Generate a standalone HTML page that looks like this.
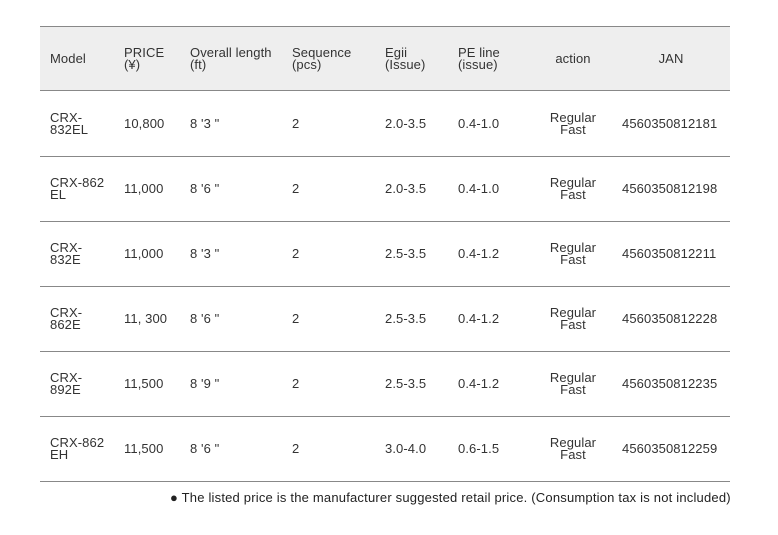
<!DOCTYPE html>
<html><head><meta charset="utf-8"><style>
body{margin:0;width:778px;height:535px;background:#fff;font-family:"Liberation Sans","Noto Sans CJK JP",sans-serif;font-size:13px;color:#333;position:relative;overflow:hidden}
.hd{position:absolute;left:40px;top:26px;width:690px;height:65px;background:#eeeeee;border-top:1px solid #888;border-bottom:1px solid #888;box-sizing:border-box}
.ln{position:absolute;left:40px;width:690px;height:1px;background:#888}
.t{position:absolute;line-height:12px;white-space:nowrap;letter-spacing:0.1px}
.c{text-align:center;transform:translateX(-50%)}
.note{position:absolute;left:170px;top:490px;font-size:13px;color:#222;letter-spacing:0.2px;white-space:nowrap}
</style></head><body>
<div class="hd"></div>
<div class="ln" style="top:156px"></div>
<div class="ln" style="top:221px"></div>
<div class="ln" style="top:286px"></div>
<div class="ln" style="top:351px"></div>
<div class="ln" style="top:416px"></div>
<div class="ln" style="top:481px"></div>

<div class="t" style="left:50px;top:53px">Model</div>
<div class="t" style="left:124px;top:47px">PRICE<br>(¥)</div>
<div class="t" style="left:190px;top:47px">Overall length<br>(ft)</div>
<div class="t" style="left:292px;top:47px">Sequence<br>(pcs)</div>
<div class="t" style="left:385px;top:47px">Egii<br>(Issue)</div>
<div class="t" style="left:458px;top:47px">PE line<br>(issue)</div>
<div class="t c" style="left:573px;top:53px">action</div>
<div class="t c" style="left:671px;top:53px">JAN</div>

<div class="t" style="left:50px;top:112px">CRX-<br>832EL</div>
<div class="t" style="left:124px;top:118px">10,800</div>
<div class="t" style="left:190px;top:118px">8 '3 "</div>
<div class="t" style="left:292px;top:118px">2</div>
<div class="t" style="left:385px;top:118px">2.0-3.5</div>
<div class="t" style="left:458px;top:118px">0.4-1.0</div>
<div class="t c" style="left:573px;top:112px">Regular<br>Fast</div>
<div class="t" style="left:622px;top:118px">4560350812181</div>

<div class="t" style="left:50px;top:177px">CRX-862<br>EL</div>
<div class="t" style="left:124px;top:183px">11,000</div>
<div class="t" style="left:190px;top:183px">8 '6 "</div>
<div class="t" style="left:292px;top:183px">2</div>
<div class="t" style="left:385px;top:183px">2.0-3.5</div>
<div class="t" style="left:458px;top:183px">0.4-1.0</div>
<div class="t c" style="left:573px;top:177px">Regular<br>Fast</div>
<div class="t" style="left:622px;top:183px">4560350812198</div>

<div class="t" style="left:50px;top:242px">CRX-<br>832E</div>
<div class="t" style="left:124px;top:248px">11,000</div>
<div class="t" style="left:190px;top:248px">8 '3 "</div>
<div class="t" style="left:292px;top:248px">2</div>
<div class="t" style="left:385px;top:248px">2.5-3.5</div>
<div class="t" style="left:458px;top:248px">0.4-1.2</div>
<div class="t c" style="left:573px;top:242px">Regular<br>Fast</div>
<div class="t" style="left:622px;top:248px">4560350812211</div>

<div class="t" style="left:50px;top:307px">CRX-<br>862E</div>
<div class="t" style="left:124px;top:313px">11, 300</div>
<div class="t" style="left:190px;top:313px">8 '6 "</div>
<div class="t" style="left:292px;top:313px">2</div>
<div class="t" style="left:385px;top:313px">2.5-3.5</div>
<div class="t" style="left:458px;top:313px">0.4-1.2</div>
<div class="t c" style="left:573px;top:307px">Regular<br>Fast</div>
<div class="t" style="left:622px;top:313px">4560350812228</div>

<div class="t" style="left:50px;top:372px">CRX-<br>892E</div>
<div class="t" style="left:124px;top:378px">11,500</div>
<div class="t" style="left:190px;top:378px">8 '9 "</div>
<div class="t" style="left:292px;top:378px">2</div>
<div class="t" style="left:385px;top:378px">2.5-3.5</div>
<div class="t" style="left:458px;top:378px">0.4-1.2</div>
<div class="t c" style="left:573px;top:372px">Regular<br>Fast</div>
<div class="t" style="left:622px;top:378px">4560350812235</div>

<div class="t" style="left:50px;top:437px">CRX-862<br>EH</div>
<div class="t" style="left:124px;top:443px">11,500</div>
<div class="t" style="left:190px;top:443px">8 '6 "</div>
<div class="t" style="left:292px;top:443px">2</div>
<div class="t" style="left:385px;top:443px">3.0-4.0</div>
<div class="t" style="left:458px;top:443px">0.6-1.5</div>
<div class="t c" style="left:573px;top:437px">Regular<br>Fast</div>
<div class="t" style="left:622px;top:443px">4560350812259</div>

<div class="note">● The listed price is the manufacturer suggested retail price. (Consumption tax is not included)</div>
</body></html>
